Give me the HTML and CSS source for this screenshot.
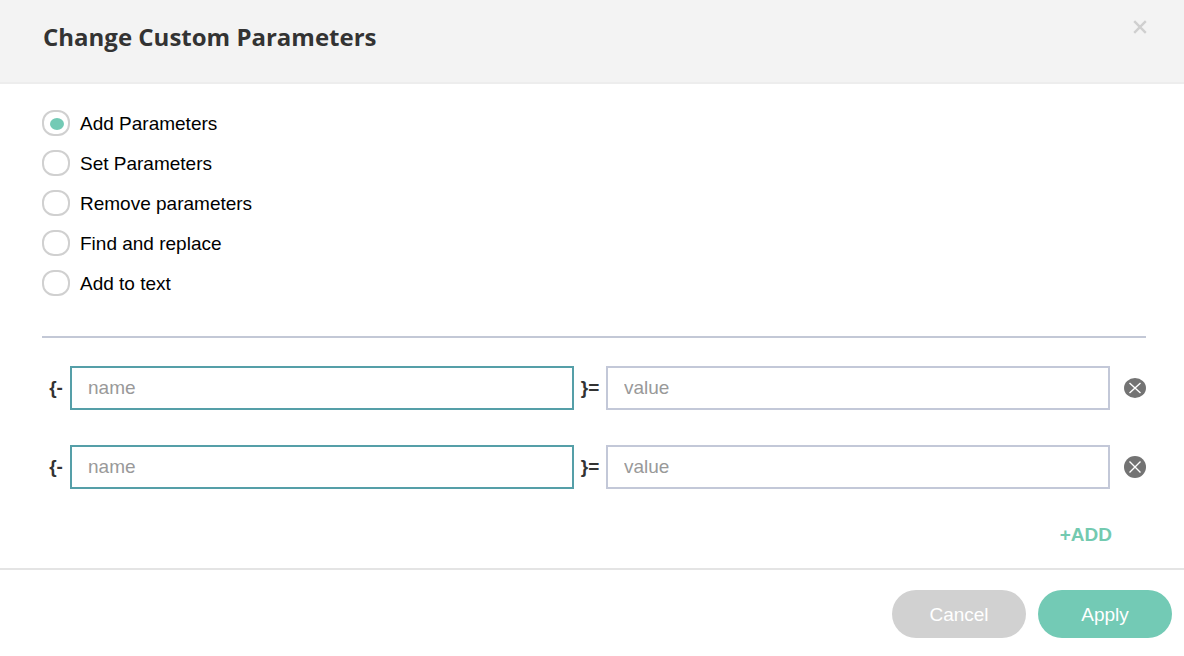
FILE: index.html
```html
<!DOCTYPE html>
<html lang="en">
<head>
  <meta charset="UTF-8" />
  <meta name="viewport" content="width=device-width, initial-scale=1.0"/>
  <title>Change Custom Parameters</title>
  <link rel="stylesheet" href="styles.css">
</head>
<body>

<div class="modal">
  <header class="modal-header">
    <h1>Change Custom Parameters</h1>
    <button type="button" class="close-btn" aria-label="Close">
      <svg width="14" height="14" viewBox="0 0 14 14"><path d="M1.2 1.2L12.8 12.8M12.8 1.2L1.2 12.8" stroke="#cfcfcf" stroke-width="2.4" fill="none"/></svg>
    </button>
  </header>

  <form class="modal-form">
    <div class="modal-body">
      <div class="options">
        <label class="option"><input type="radio" name="action" value="add" checked>Add Parameters</label>
        <label class="option"><input type="radio" name="action" value="set">Set Parameters</label>
        <label class="option"><input type="radio" name="action" value="remove">Remove parameters</label>
        <label class="option"><input type="radio" name="action" value="replace">Find and replace</label>
        <label class="option"><input type="radio" name="action" value="text">Add to text</label>
      </div>

      <div class="params">
        <div class="param-row">
          <label class="sign" for="name1">{-</label>
          <input type="text" class="param-input name" id="name1" placeholder="name">
          <label class="sign" for="value1">}=</label>
          <input type="text" class="param-input" id="value1" placeholder="value">
          <button type="button" class="remove-btn" aria-label="Remove">
            <svg width="22" height="22" viewBox="0 0 22 22"><ellipse cx="11" cy="11" rx="11" ry="10" fill="#737373"/><path d="M5.5 6L16.5 16M16.5 6L5.5 16" stroke="#fff" stroke-width="1.4" fill="none"/></svg>
          </button>
        </div>
        <div class="param-row">
          <label class="sign" for="name2">{-</label>
          <input type="text" class="param-input name" id="name2" placeholder="name">
          <label class="sign" for="value2">}=</label>
          <input type="text" class="param-input" id="value2" placeholder="value">
          <button type="button" class="remove-btn" aria-label="Remove">
            <svg width="22" height="22" viewBox="0 0 22 22"><circle cx="11" cy="11" r="11" fill="#737373"/><path d="M5.5 5.5L16.5 16.5M16.5 5.5L5.5 16.5" stroke="#fff" stroke-width="1.4" fill="none"/></svg>
          </button>
        </div>
      </div>

      <button type="button" class="add-btn">+ADD</button>
    </div>

    <footer class="modal-footer">
      <button type="button" class="btn cancel">Cancel</button>
      <button type="submit" class="btn apply">Apply</button>
    </footer>
  </form>
</div>

</body>
</html>
```
FILE: styles.css
```css
* {
  box-sizing: border-box;
}
body {
  margin: 0;
  background-color: #fff;
  color: #000;
  font-family: "Liberation Sans", Arial, sans-serif;
  font-size: 19px;
}
button {
  border: none;
  background: none;
  padding: 0;
  font-family: inherit;
  font-size: inherit;
  cursor: pointer;
}
svg {
  display: block;
}

/* header */
.modal-header {
  display: flex;
  justify-content: space-between;
  align-items: flex-start;
  padding: 20px 37px 28px 43px;
  background-color: #f3f3f3;
  border-bottom: 2px solid #ededed;
}
.modal-header h1 {
  margin: 0;
  font-family: "Open Sans", sans-serif;
  font-size: 24px;
  line-height: 34px;
  font-weight: 700;
  color: #333;
}

/* radio list */
.modal-body {
  display: flex;
  flex-direction: column;
  padding: 26px 38px 20px 42px;
}
.options {
  display: flex;
  flex-direction: column;
  gap: 12px;
  padding-bottom: 38px;
  border-bottom: 2px solid #c3c8d6;
}
.option {
  display: flex;
  align-items: flex-start;
  gap: 10px;
  line-height: 28px;
  cursor: pointer;
}
.option input {
  appearance: none;
  display: grid;
  place-items: center;
  width: 28px;
  height: 26px;
  margin: 0;
  border: 2px solid #d0d0d0;
  border-radius: 12px;
  background-color: #fff;
}
.option input:checked::before {
  content: "";
  width: 14px;
  height: 12px;
  margin: 2px 0 0 2px;
  border-radius: 50%;
  background-color: #73cab5;
}

/* name / value rows */
.params {
  display: flex;
  flex-direction: column;
  gap: 35px;
  padding-top: 28px;
}
.param-row {
  display: grid;
  grid-template-columns: 28px 1fr 32px 1fr 36px;
  align-items: center;
}
.sign {
  text-align: center;
  font-weight: 700;
  color: #333;
}
.param-input {
  width: 100%;
  min-width: 0;
  height: 44px;
  padding: 0 16px;
  border: 2px solid #c3c8d8;
  background-color: #fff;
  font-family: inherit;
  font-size: inherit;
  color: #333;
  outline: none;
}
.param-input.name {
  border-color: #559fa8;
}
.param-input::placeholder {
  color: #999;
}
.remove-btn {
  justify-self: end;
}
.add-btn {
  align-self: flex-end;
  margin: 33px 34px 0 0;
  font-weight: 700;
  line-height: 26px;
  color: #73cab0;
}

/* footer */
.modal-footer {
  display: flex;
  justify-content: flex-end;
  gap: 12px;
  padding: 20px 12px;
  border-top: 2px solid #e4e4e4;
}
.btn {
  width: 134px;
  height: 48px;
  padding-top: 2px;
  border-radius: 24px;
  color: #fff;
}
.btn.cancel {
  background-color: #d1d1d1;
}
.btn.apply {
  background-color: #73cab5;
}
```
